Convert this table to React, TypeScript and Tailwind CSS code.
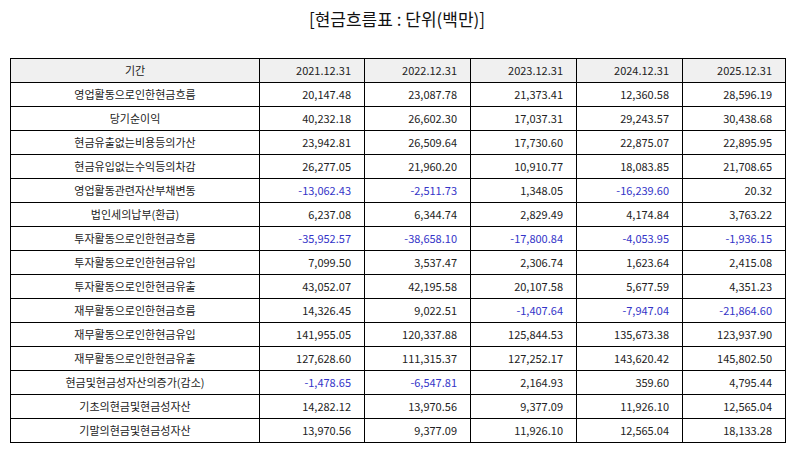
import React from "react";

const rows: [string, string[]][] = [
  ["영업활동으로인한현금흐름", ["20,147.48", "23,087.78", "21,373.41", "12,360.58", "28,596.19"]],
  ["당기순이익", ["40,232.18", "26,602.30", "17,037.31", "29,243.57", "30,438.68"]],
  ["현금유출없는비용등의가산", ["23,942.81", "26,509.64", "17,730.60", "22,875.07", "22,895.95"]],
  ["현금유입없는수익등의차감", ["26,277.05", "21,960.20", "10,910.77", "18,083.85", "21,708.65"]],
  ["영업활동관련자산부채변동", ["-13,062.43", "-2,511.73", "1,348.05", "-16,239.60", "20.32"]],
  ["법인세의납부(환급)", ["6,237.08", "6,344.74", "2,829.49", "4,174.84", "3,763.22"]],
  ["투자활동으로인한현금흐름", ["-35,952.57", "-38,658.10", "-17,800.84", "-4,053.95", "-1,936.15"]],
  ["투자활동으로인한현금유입", ["7,099.50", "3,537.47", "2,306.74", "1,623.64", "2,415.08"]],
  ["투자활동으로인한현금유출", ["43,052.07", "42,195.58", "20,107.58", "5,677.59", "4,351.23"]],
  ["재무활동으로인한현금흐름", ["14,326.45", "9,022.51", "-1,407.64", "-7,947.04", "-21,864.60"]],
  ["재무활동으로인한현금유입", ["141,955.05", "120,337.88", "125,844.53", "135,673.38", "123,937.90"]],
  ["재무활동으로인한현금유출", ["127,628.60", "111,315.37", "127,252.17", "143,620.42", "145,802.50"]],
  ["현금및현금성자산의증가(감소)", ["-1,478.65", "-6,547.81", "2,164.93", "359.60", "4,795.44"]],
  ["기초의현금및현금성자산", ["14,282.12", "13,970.56", "9,377.09", "11,926.10", "12,565.04"]],
  ["기말의현금및현금성자산", ["13,970.56", "9,377.09", "11,926.10", "12,565.04", "18,133.28"]],
];

const years = ["2021.12.31", "2022.12.31", "2023.12.31", "2024.12.31", "2025.12.31"];

export default function App() {
  return (
    <div
      className="w-[794px] h-[452px] bg-white text-[#222222] overflow-hidden"
      style={{ fontFamily: '"Noto Sans CJK KR", "Noto Sans", sans-serif' }}
    >
      <div className="h-[36px] flex items-center justify-center text-[17px] leading-none text-[#111111]">
        [현금흐름표 : 단위(백만)]
      </div>
      <div className="mt-[22px] px-[10px]">
        <table className="w-[775px] table-fixed border-collapse text-[11px] leading-none">
          <colgroup>
            <col className="w-[249px]" />
            <col className="w-[105px]" />
            <col className="w-[106px]" />
            <col className="w-[106px]" />
            <col className="w-[106px]" />
            <col className="w-[103px]" />
          </colgroup>
          <thead>
            <tr className="h-[24px] bg-[#f0f0f0]">
              <th className="border border-black font-normal text-center p-0">기간</th>
              {years.map((y) => (
                <th key={y} className="border border-black font-normal text-right pr-[13px] p-0">
                  {y}
                </th>
              ))}
            </tr>
          </thead>
          <tbody>
            {rows.map(([label, vals]) => (
              <tr key={label} className="h-[24px]">
                <td className="border border-black text-center p-0">{label}</td>
                {vals.map((v, i) => (
                  <td
                    key={i}
                    className={
                      "border border-black text-right pr-[13px] p-0 " +
                      (v.startsWith("-") ? "text-[#3434c8]" : "")
                    }
                  >
                    {v}
                  </td>
                ))}
              </tr>
            ))}
          </tbody>
        </table>
      </div>
    </div>
  );
}
